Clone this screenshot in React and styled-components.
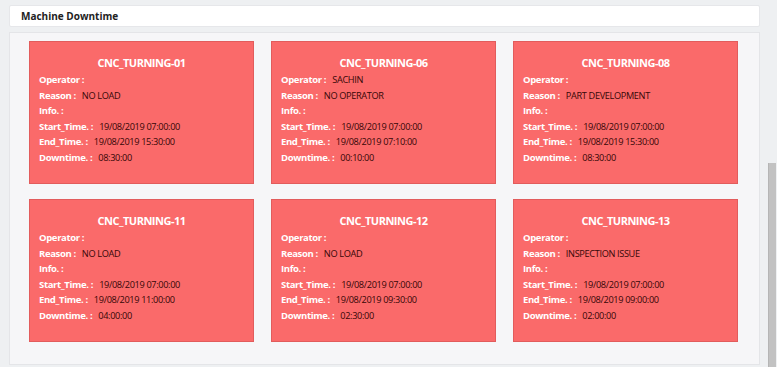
import React from 'react'
import styled, { createGlobalStyle } from 'styled-components'

const GlobalStyle = createGlobalStyle`
  html, body {
    margin: 0;
    padding: 0;
    background: #eef0f2;
    font-family: "Open Sans", "Noto Sans", sans-serif;
  }
`

const machines = [
  { name: 'CNC_TURNING-01', operator: '', reason: 'NO LOAD', info: '', start: '19/08/2019 07:00:00', end: '19/08/2019 15:30:00', downtime: '08:30:00' },
  { name: 'CNC_TURNING-06', operator: 'SACHIN', reason: 'NO OPERATOR', info: '', start: '19/08/2019 07:00:00', end: '19/08/2019 07:10:00', downtime: '00:10:00' },
  { name: 'CNC_TURNING-08', operator: '', reason: 'PART DEVELOPMENT', info: '', start: '19/08/2019 07:00:00', end: '19/08/2019 15:30:00', downtime: '08:30:00' },
  { name: 'CNC_TURNING-11', operator: '', reason: 'NO LOAD', info: '', start: '19/08/2019 07:00:00', end: '19/08/2019 11:00:00', downtime: '04:00:00' },
  { name: 'CNC_TURNING-12', operator: '', reason: 'NO LOAD', info: '', start: '19/08/2019 07:00:00', end: '19/08/2019 09:30:00', downtime: '02:30:00' },
  { name: 'CNC_TURNING-13', operator: '', reason: 'INSPECTION ISSUE', info: '', start: '19/08/2019 07:00:00', end: '19/08/2019 09:00:00', downtime: '02:00:00' }
]

const Page = styled.div`
  display: flex;
  height: 367px;
  overflow: hidden;
`

const Main = styled.div`
  flex: 1;
  padding: 5px 6px 0 9px;
`

const Header = styled.div`
  height: 20px;
  background: #fff;
  border: 1px solid #e6e7ea;
  border-radius: 2px;
  padding-left: 11px;
  display: flex;
  align-items: center;
  font-size: 10px;
  font-weight: 700;
  color: #222;
`

const Panel = styled.div`
  margin-top: 5px;
  height: 323px;
  background: #f6f6f8;
  border: 1px solid #e4e5e8;
  padding: 8px 21px 0 19px;
`

const Grid = styled.div`
  display: grid;
  grid-template-columns: repeat(3, 225px);
  column-gap: 17px;
  row-gap: 15px;
`

const Card = styled.div`
  box-sizing: border-box;
  height: 143px;
  background: #fa6a6a;
  border: 1px solid #e25c5c;
  padding: 13px 9px 0;
`

const Title = styled.div`
  text-align: center;
  color: #fff;
  font-size: 11px;
  letter-spacing: -0.5px;
  font-weight: 700;
  line-height: 16px;
  margin-bottom: 1px;
`

const Row = styled.div`
  display: flex;
  align-items: baseline;
  line-height: 15.6px;
  font-size: 9.5px;
  letter-spacing: -0.35px;
  white-space: nowrap;
`

const Label = styled.span`
  color: #fff;
  font-weight: 700;
`

const Value = styled.span`
  color: #360707;
  font-size: 9.2px;
  margin-left: 6px;
`

const ScrollTrack = styled.div`
  width: 12px;
  background: #eef0f2;
  display: flex;
  justify-content: center;
`

const Thumb = styled.div`
  margin-top: 163px;
  width: 7px;
  background: #c2c2c2;
  border-left: 1px solid #b5b5b5;
`

function MachineCard ({ m }) {
  const rows = [
    ['Operator :', m.operator],
    ['Reason :', m.reason],
    ['Info. :', m.info],
    ['Start_Time. :', m.start],
    ['End_Time. :', m.end],
    ['Downtime. :', m.downtime]
  ]
  return (
    <Card>
      <Title>{m.name}</Title>
      {rows.map(([label, value]) => (
        <Row key={label}>
          <Label>{label}</Label>
          {value && <Value>{value}</Value>}
        </Row>
      ))}
    </Card>
  )
}

export default function App () {
  return (
    <Page>
      <GlobalStyle />
      <Main>
        <Header>Machine Downtime</Header>
        <Panel>
          <Grid>
            {machines.map(m => <MachineCard key={m.name} m={m} />)}
          </Grid>
        </Panel>
      </Main>
      <ScrollTrack>
        <Thumb />
      </ScrollTrack>
    </Page>
  )
}
